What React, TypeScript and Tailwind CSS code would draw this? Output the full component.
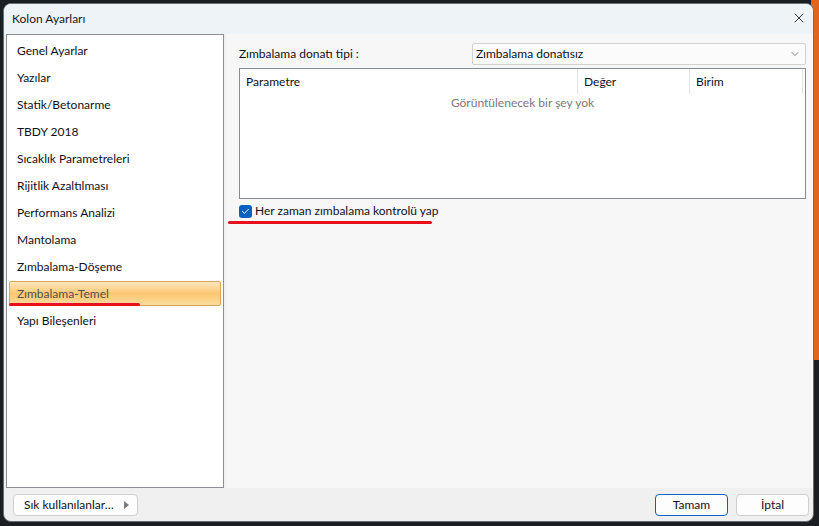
import { ChevronDown, X, Check } from 'lucide-react'

const ITEMS = [
  'Genel Ayarlar',
  'Yazılar',
  'Statik/Betonarme',
  'TBDY 2018',
  'Sıcaklık Parametreleri',
  'Rijitlik Azaltılması',
  'Performans Analizi',
  'Mantolama',
  'Zımbalama-Döşeme',
  'Zımbalama-Temel',
  'Yapı Bileşenleri',
]

const SELECTED = 'Zımbalama-Temel'

function SideList() {
  return (
    <div className="ml-[2px] w-[218px] shrink-0 border border-[#8c9096] bg-white pt-[2px]">
      {ITEMS.map(item =>
        item === SELECTED ? (
          <div key={item} className="relative mx-[2px] flex h-[27px] items-center">
            <div className="flex h-[25px] w-full items-center rounded-[2px] border border-[#d6a65a] bg-gradient-to-b from-[#fde7bf] via-[#fbc771] to-[#fcdc9c] pl-[7px] text-[#505050]">
              {item}
            </div>
            {/* red marker */}
            <div className="absolute left-[0px] top-[23px] h-[3px] w-[131px] rounded-full bg-[#e8101c]" />
          </div>
        ) : (
          <div key={item} className="flex h-[27px] items-center pl-[10px] text-[#10101c]">
            {item}
          </div>
        )
      )}
    </div>
  )
}

function ParamTable() {
  return (
    <div className="h-[131px] border border-[#878b93] bg-white">
      <div className="flex h-[25px] items-stretch text-[#10101c]">
        <div className="flex w-[338px] items-center border-r border-[#e3e3e3] pl-[6px]">Parametre</div>
        <div className="flex w-[112px] items-center border-r border-[#e3e3e3] pl-[6px]">Değer</div>
        <div className="flex w-[113px] items-center border-r border-[#e3e3e3] pl-[6px]">Birim</div>
      </div>
      <div className="flex justify-center pt-[3px] text-[#7a7a7a]">Görüntülenecek bir şey yok</div>
    </div>
  )
}

export default function App() {
  return (
    <div
      className="relative h-[526px] w-[819px] overflow-hidden bg-[#1b1e22] pl-[3px] pt-[3px] text-[12px] leading-none"
      style={{ fontFamily: 'Lato, "Liberation Sans", sans-serif' }}
    >
      {/* orange app behind on the right */}
      <div className="absolute right-0 top-0 h-[360px] w-[8px] bg-[#e3651d]" />

      <div className="relative flex h-[519px] w-[811px] flex-col overflow-hidden rounded-[8px] border border-[#6b6f75] bg-[#f0f0f0]">
        {/* title bar */}
        <div className="flex h-[30px] shrink-0 items-center justify-between bg-[#eef3f8] pl-[8px] pr-[4px] text-[#1a1a1a]">
          <span>Kolon Ayarları</span>
          <X className="mb-[2px] mr-[2px] h-[16px] w-[16px] text-[#1a1a1a]" strokeWidth={1.3} />
        </div>

        {/* body */}
        <div className="flex h-[454px] shrink-0">
          <SideList />

          <div className="ml-[2px] flex flex-1 flex-col bg-[#f7f7f7] pl-[13px] pr-[7px] pt-[9px]">
            <div className="flex h-[22px] items-center">
              <span className="w-[233px] text-[#10101c]">Zımbalama donatı tipi :</span>
              <div className="flex h-[22px] flex-1 items-center justify-between rounded-[2px] border border-[#d2d2d2] bg-[#fbfbfb] pl-[3px] pr-[4px] text-[#10101c]">
                <span>Zımbalama donatısız</span>
                <ChevronDown className="h-[12px] w-[12px] text-[#404040]" strokeWidth={1.3} />
              </div>
            </div>

            <div className="mt-[3px]">
              <ParamTable />
            </div>

            <div className="relative mt-[4px] flex h-[16px] items-center">
              <div className="flex h-[13px] w-[13px] items-center justify-center rounded-[3px] bg-[#0860c0]">
                <Check className="h-[9px] w-[9px] text-white" strokeWidth={2.5} />
              </div>
              <span className="ml-[3px] text-[#10101c]">Her zaman zımbalama kontrolü yap</span>
              {/* red marker */}
              <div className="absolute left-[-11px] top-[18px] h-[3px] w-[204px] rounded-full bg-[#e8101c]" />
            </div>
          </div>
        </div>

        {/* bottom bar */}
        <div className="flex flex-1 items-center justify-between pl-[9px] pr-[4px]">
          <button className="flex h-[22px] w-[125px] items-center justify-between rounded-[4px] border border-[#d0d0d0] bg-[#fdfdfd] pl-[10px] pr-[8px] text-[#10101c]">
            <span>Sık kullanılanlar…</span>
            <span className="h-0 w-0 border-y-[4px] border-l-[5px] border-y-transparent border-l-[#7a7a7a]" />
          </button>
          <div className="flex gap-[8px]">
            <button className="h-[22px] w-[73px] rounded-[4px] border border-[#0860c0] bg-[#fdfdfd] text-[#10101c]">Tamam</button>
            <button className="h-[22px] w-[73px] rounded-[4px] border border-[#d0d0d0] bg-[#fdfdfd] text-[#10101c]">İptal</button>
          </div>
        </div>
      </div>
    </div>
  )
}
